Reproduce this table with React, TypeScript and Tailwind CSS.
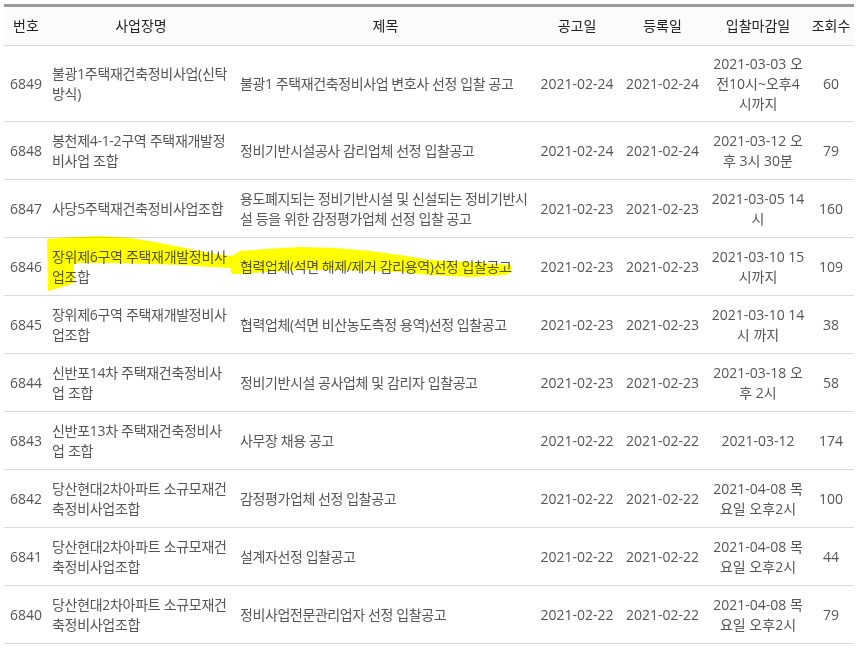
import React from "react";

type Row = {
  no: string;
  name: string[];
  title: string[];
  d1: string;
  d2: string;
  due: string[];
  views: string;
};

const rows: Row[] = [
  { no: "6849", name: ["불광1주택재건축정비사업(신탁", "방식)"], title: ["불광1 주택재건축정비사업 변호사 선정 입찰 공고"], d1: "2021-02-24", d2: "2021-02-24", due: ["2021-03-03 오", "전10시~오후4", "시까지"], views: "60" },
  { no: "6848", name: ["봉천제4-1-2구역 주택재개발정", "비사업 조합"], title: ["정비기반시설공사 감리업체 선정 입찰공고"], d1: "2021-02-24", d2: "2021-02-24", due: ["2021-03-12 오", "후 3시 30분"], views: "79" },
  { no: "6847", name: ["사당5주택재건축정비사업조합"], title: ["용도폐지되는 정비기반시설 및 신설되는 정비기반시", "설 등을 위한 감정평가업체 선정 입찰 공고"], d1: "2021-02-23", d2: "2021-02-23", due: ["2021-03-05 14", "시"], views: "160" },
  { no: "6846", name: ["장위제6구역 주택재개발정비사", "업조합"], title: ["협력업체(석면 해제/제거 감리용역)선정 입찰공고"], d1: "2021-02-23", d2: "2021-02-23", due: ["2021-03-10 15", "시까지"], views: "109" },
  { no: "6845", name: ["장위제6구역 주택재개발정비사", "업조합"], title: ["협력업체(석면 비산농도측정 용역)선정 입찰공고"], d1: "2021-02-23", d2: "2021-02-23", due: ["2021-03-10 14", "시 까지"], views: "38" },
  { no: "6844", name: ["신반포14차 주택재건축정비사", "업 조합"], title: ["정비기반시설 공사업체 및 감리자 입찰공고"], d1: "2021-02-23", d2: "2021-02-23", due: ["2021-03-18 오", "후 2시"], views: "58" },
  { no: "6843", name: ["신반포13차 주택재건축정비사", "업 조합"], title: ["사무장 채용 공고"], d1: "2021-02-22", d2: "2021-02-22", due: ["2021-03-12"], views: "174" },
  { no: "6842", name: ["당산현대2차아파트 소규모재건", "축정비사업조합"], title: ["감정평가업체 선정 입찰공고"], d1: "2021-02-22", d2: "2021-02-22", due: ["2021-04-08 목", "요일 오후2시"], views: "100" },
  { no: "6841", name: ["당산현대2차아파트 소규모재건", "축정비사업조합"], title: ["설계자선정 입찰공고"], d1: "2021-02-22", d2: "2021-02-22", due: ["2021-04-08 목", "요일 오후2시"], views: "44" },
  { no: "6840", name: ["당산현대2차아파트 소규모재건", "축정비사업조합"], title: ["정비사업전문관리업자 선정 입찰공고"], d1: "2021-02-22", d2: "2021-02-22", due: ["2021-04-08 목", "요일 오후2시"], views: "79" },
];

function Lines({ lines }: { lines: string[] }) {
  return (
    <>
      {lines.map((l, i) => (
        <div key={i} className="whitespace-nowrap">
          {l}
        </div>
      ))}
    </>
  );
}

export default function App() {
  return (
    <div
      className="relative w-[863px] h-[650px] bg-white overflow-hidden pt-[4px] pl-[4px]"
      style={{ fontFamily: '"Open Sans", "Noto Sans CJK KR", sans-serif' }}
    >
      <table className="w-[850px] table-fixed border-collapse text-[14px] leading-[20px] text-[#555]">
        <colgroup>
          <col className="w-[44px]" />
          <col className="w-[186px]" />
          <col className="w-[303px]" />
          <col className="w-[80px]" />
          <col className="w-[91px]" />
          <col className="w-[100px]" />
          <col className="w-[46px]" />
        </colgroup>
        <thead>
          <tr className="h-[40px] border-t-[3px] border-t-[#999] border-b border-b-[#d9d9d9] bg-[#fbfbfb] text-[#222]">
            <th className="font-normal text-center">번호</th>
            <th className="font-normal text-center">사업장명</th>
            <th className="font-normal text-center">제목</th>
            <th className="font-normal text-center">공고일</th>
            <th className="font-normal text-center">등록일</th>
            <th className="font-normal text-center">입찰마감일</th>
            <th className="font-normal text-center">조회수</th>
          </tr>
        </thead>
        <tbody>
          {rows.map((r) => (
            <tr key={r.no} className="h-[58px] border-b border-b-[#d9d9d9]">
              <td className="py-[7.5px] text-center align-middle">{r.no}</td>
              <td className="py-[7.5px] pl-[4px] align-middle tracking-[-0.3px]">
                <Lines lines={r.name} />
              </td>
              <td className="py-[7.5px] pl-[6px] align-middle tracking-[-0.4px]">
                <Lines lines={r.title} />
              </td>
              <td className="py-[7.5px] text-center align-middle">{r.d1}</td>
              <td className="py-[7.5px] text-center align-middle">{r.d2}</td>
              <td className="py-[7.5px] text-center align-middle">
                <Lines lines={r.due} />
              </td>
              <td className="py-[7.5px] text-center align-middle">{r.views}</td>
            </tr>
          ))}
        </tbody>
      </table>

      <svg
        className="absolute left-0 top-0 pointer-events-none mix-blend-multiply"
        width="863"
        height="650"
        viewBox="0 0 863 650"
      >
        <path
          fill="#ffff00"
          d="M47 239 L75 237 L100 236 L130 238 L160 243 L190 249 L215 254 L232 256 L240 251 L265 249 L300 247 L335 248 L370 251 L400 255 L430 260 L470 262 L500 264 L511 265 L512 272 L505 275 L470 277 L430 275 L400 272 L370 271 L330 270 L300 270 L265 272 L240 274 L232 274 L230 268 L210 267 L180 265 L150 264 L110 263 L80 263 L74 264 L74 283 L62 287 L48 291 Z"
        />
      </svg>
    </div>
  );
}
